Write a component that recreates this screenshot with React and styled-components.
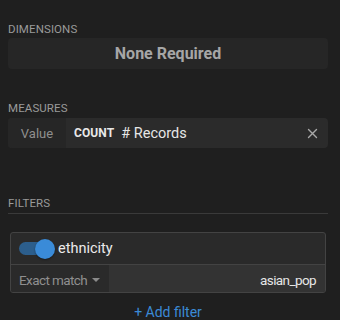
import React from "react";
import styled, { createGlobalStyle } from "styled-components";

const Global = createGlobalStyle`
  html, body { margin: 0; padding: 0; background: #1f1f1f; }
  body { font-family: Roboto, "Noto Sans", sans-serif; -webkit-font-smoothing: antialiased; }
`;

const Panel = styled.div`
  width: 340px;
  height: 320px;
  overflow: hidden;
  background: #1f1f1f;
  padding: 0 12px 0 8px;
  box-sizing: border-box;
  display: flex;
  flex-direction: column;
`;

const SectionLabel = styled.div`
  font-size: 11.5px;
  letter-spacing: 0.1px;
  text-transform: uppercase;
  color: #9a9a9a;
  line-height: 14px;
  margin-top: ${(p) => p.$top}px;
  padding-bottom: ${(p) => (p.$rule ? 3 : 0)}px;
  border-bottom: ${(p) => (p.$rule ? "1px solid #3a3a3a" : "none")};
`;

const EmptyBox = styled.div`
  margin-top: 2px;
  height: 32px;
  border-radius: 4px;
  background: #262626;
  display: flex;
  align-items: center;
  justify-content: center;
  font-size: 16px;
  font-weight: 700;
  color: #a6a6a6;
`;

const MeasureRow = styled.div`
  margin-top: 3px;
  height: 32px;
  border-radius: 4px;
  overflow: hidden;
  display: flex;
  background: #2b2b2b;
`;

const MeasureKey = styled.div`
  width: 58px;
  background: #262626;
  display: flex;
  align-items: center;
  justify-content: center;
  font-size: 13px;
  color: #8f8f8f;
`;

const MeasureBody = styled.div`
  flex: 1;
  display: flex;
  align-items: center;
  padding: 0 10px 0 8px;
  gap: 7px;
`;

const Agg = styled.span`
  font-size: 12px;
  font-weight: 700;
  color: #e8e8e8;
  letter-spacing: 0.1px;
`;

const FieldName = styled.span`
  flex: 1;
  font-size: 14.5px;
  color: #e6e6e6;
`;

const Card = styled.div`
  margin: 18px 2px 0 2px;
  border: 1px solid #434343;
  border-radius: 3px;
  overflow: hidden;
  background: #2a2a2a;
`;

const CardHead = styled.div`
  height: 31px;
  display: flex;
  align-items: center;
  padding-left: 8px;
  gap: 3px;
  border-bottom: 1px solid #434343;
  font-size: 14.5px;
  color: #ebebeb;
`;

const Toggle = styled.div`
  position: relative;
  width: 36px;
  height: 22px;
  display: flex;
  align-items: center;
`;

const Track = styled.div`
  width: 28px;
  height: 13px;
  border-radius: 7px;
  background: #2c5e8c;
`;

const Knob = styled.div`
  position: absolute;
  right: 0;
  top: 1px;
  width: 20px;
  height: 20px;
  border-radius: 50%;
  background: #3a8bd8;
  box-shadow: 0 1px 2px rgba(0, 0, 0, 0.4);
`;

const CardFoot = styled.div`
  height: 29px;
  display: flex;
`;

const MatchSelect = styled.div`
  width: 98px;
  flex-shrink: 0;
  white-space: nowrap;
  display: flex;
  align-items: center;
  justify-content: space-between;
  padding: 0 9px 0 8px;
  box-sizing: border-box;
  font-size: 13.5px;
  letter-spacing: -0.6px;
  color: #8f8f8f;
  background: #2a2a2a;
`;

const Caret = styled.span`
  width: 0;
  height: 0;
  border-left: 4px solid transparent;
  border-right: 4px solid transparent;
  border-top: 4px solid #8a8a8a;
`;

const ValueCell = styled.div`
  flex: 1;
  background: #333333;
  display: flex;
  align-items: center;
  justify-content: flex-end;
  padding-right: 9px;
  font-size: 13.5px;
  letter-spacing: -0.6px;
  color: #e6e6e6;
`;

const AddFilter = styled.div`
  margin-top: 11px;
  text-align: center;
  font-size: 14px;
  line-height: 16px;
  color: #3b8ad6;
`;

export default function App() {
  return (
    <>
      <Global />
      <Panel>
        <SectionLabel $top={22}>Dimensions</SectionLabel>
        <EmptyBox>None Required</EmptyBox>
        <SectionLabel $top={32}>Measures</SectionLabel>
        <MeasureRow>
          <MeasureKey>Value</MeasureKey>
          <MeasureBody>
            <Agg>COUNT</Agg>
            <FieldName># Records</FieldName>
            <svg width="11" height="11" viewBox="0 0 11 11">
              <path d="M1.5 1.5 L9.5 9.5 M9.5 1.5 L1.5 9.5" stroke="#a8a8a8" strokeWidth="1.4" strokeLinecap="round" />
            </svg>
          </MeasureBody>
        </MeasureRow>
        <SectionLabel $top={48} $rule>Filters</SectionLabel>
        <Card>
          <CardHead>
            <Toggle>
              <Track />
              <Knob />
            </Toggle>
            ethnicity
          </CardHead>
          <CardFoot>
            <MatchSelect>
              Exact match
              <Caret />
            </MatchSelect>
            <ValueCell>asian_pop</ValueCell>
          </CardFoot>
        </Card>
        <AddFilter>+ Add filter</AddFilter>
      </Panel>
    </>
  );
}
